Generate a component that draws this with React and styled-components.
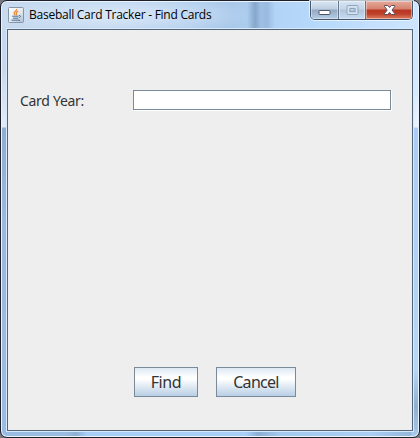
import React from "react";
import styled, { createGlobalStyle } from "styled-components";

const Global = createGlobalStyle`
  *, *::before, *::after { box-sizing: border-box; }
  body { margin: 0; background: #77777d; overflow: hidden; }
`;

const Window = styled.div`
  width: 420px;
  height: 438px;
  display: flex;
  flex-direction: column;
  padding: 0 6px 6px 5px;
  border: 1px solid #1d1f2b;
  border-radius: 7px;
  box-shadow: inset 0 0 0 1px #e9f4ff;
  background:
    linear-gradient(90deg, transparent 246px, rgba(80,112,152,.42) 254px, rgba(106,140,180,.24) 260px, rgba(100,135,178,.3) 266px, transparent 274px) 0 0 / 100% 28px no-repeat,
    radial-gradient(ellipse 135px 22px at 115px 14px, rgba(225,236,250,.85), rgba(210,228,248,.45) 65%, transparent) 0 0 / 100% 28px no-repeat,
    linear-gradient(90deg, #c7d9ed, #a9c8ea 55%, #b2d4f6 66%, #b6d9fb 75%, #cee5fe) 0 0 / 100% 29px no-repeat,
    linear-gradient(180deg, #c5d9ef 28px, #c8d9ee 70px, #e3ebf8 126px, #8facd2 127px, #9ab9de 220px, #9bbce2) 0 0 / 8px 100% no-repeat,
    linear-gradient(180deg, #cee5fe 28px, #d6eafe 90px, #eaf4ff 126px, #a9cdf4 127px, #b3d6fa 370px, #8eafd4 405px, #a9c9eb) 100% 0 / 8px 100% no-repeat,
    linear-gradient(90deg, #9bbce2 65px, #8faed2 75px, #a9cff7 86px, #a9cff7 245px, #8cadd2 257px, #a5caef 280px, #a9cdf3 370px, #91b2d6);
`;

const TitleBar = styled.header`
  height: 28px;
  flex: none;
  display: flex;
  align-items: flex-start;
  padding: 0 0 0 2px;
`;

const AppIcon = styled.svg`
  width: 16px;
  height: 16px;
  flex: none;
  margin-top: 6px;
`;

const Title = styled.h1`
  margin: 5px 0 0 5px;
  flex: 1;
  font: 400 12px/18px "Open Sans", "Noto Sans", sans-serif;
  letter-spacing: -0.25px;
  color: #000;
  white-space: nowrap;
`;

const Controls = styled.div`
  display: flex;
  height: 19px;
  border: 1px solid #47556b;
  border-top: 0;
  border-radius: 0 0 5px 5px;
  box-shadow: 0 0 0 1px rgba(240,248,255,.75);
  overflow: hidden;
`;

const ControlButton = styled.button`
  width: ${(p) => p.$width}px;
  padding: 1px 0 0;
  border: 0;
  border-right: ${(p) => (p.$close ? "0" : "1px solid #65758b")};
  display: flex;
  justify-content: center;
  background: ${(p) =>
    p.$close
      ? "linear-gradient(#e5aa9c 0, #d5826f 8px, #b93522 9px, #bd402a 13px, #dd8062 18px)"
      : p.$disabled
        ? "linear-gradient(#d7e5f4 0, #c3d5e8 8px, #b0c5db 9px, #c5ddf3 18px)"
        : "linear-gradient(#dbe7f3 0, #bccddf 8px, #94a9c1 9px, #b4cde6 18px)"};
  box-shadow: inset 0 0 0 1px rgba(255,255,255,.4);
`;

const Glyph = styled.svg`
  display: block;
  width: 15px;
  height: 17px;
`;

const Content = styled.main`
  flex: 1;
  display: flex;
  flex-direction: column;
  justify-content: space-between;
  margin: 0 0 0 1px;
  padding: 60px 20px 33px 12px;
  border: 1px solid #526579;
  background: #eee;
  box-shadow: 0 0 0 1px #d7e9fb;
`;

const Field = styled.label`
  display: flex;
  align-items: flex-start;
  height: 21px;
`;

const Caption = styled.span`
  width: 113px;
  font: 400 14px/21px "Noto Sans", sans-serif;
  letter-spacing: -0.3px;
  color: #333;
`;

const YearInput = styled.input`
  width: 258px;
  height: 20px;
  margin: 0;
  padding: 0 3px;
  border: 1px solid #7a8a99;
  border-radius: 0;
  outline: 0;
  background: #fff;
  box-shadow: 1px 1px 0 #fff;
`;

const Actions = styled.footer`
  display: flex;
  gap: 18px;
  padding-left: 114px;
`;

const ActionButton = styled.button`
  width: ${(p) => p.$width}px;
  height: 30px;
  padding: 0;
  border: 1px solid #7a8a99;
  border-radius: 0;
  background: linear-gradient(#dde8f3 0, #fff 9px, #fff 11px, #b8cfe5 100%);
  color: #333;
  font: 400 16px/28px "Noto Sans", sans-serif;
  letter-spacing: ${(p) => p.$spacing}px;
`;

export default function App() {
  return (
    <>
      <Global />
      <Window>
        <TitleBar>
          <AppIcon viewBox="0 0 16 16" fill="none">
            <defs>
              <linearGradient id="tile" x2="1" y2="1">
                <stop stopColor="#fff" />
                <stop offset=".55" stopColor="#e4e9ef" />
                <stop offset="1" stopColor="#aebed0" />
              </linearGradient>
            </defs>
            <rect x=".5" y=".5" width="15" height="15" rx="1" fill="url(#tile)" stroke="#8595a8" />
            <path d="M8.7 2C9.2 4.1 5.4 4.4 6.2 6.4c.2.6.8 1 .9 1.7M10.3 4.3C8.6 5 7.8 5.6 8.4 6.6c.3.5.3 1-.3 1.5" stroke="#e9842d" strokeWidth="1.2" />
            <path d="M4.2 9.2h6.3M5 11.2h5M10.9 8.6c2.2-.5 2.1 1.6-.2 2.3M3.4 13.2h8.8" stroke="#476f98" />
          </AppIcon>
          <Title>Baseball Card Tracker - Find Cards</Title>
          <Controls>
            <ControlButton $width={28} aria-label="Minimize">
              <Glyph viewBox="0 0 15 17">
                <rect x="2" y="8.5" width="11" height="4" rx=".7" fill="#fff" stroke="#4d5368" />
              </Glyph>
            </ControlButton>
            <ControlButton $width={27} $disabled aria-label="Maximize">
              <Glyph viewBox="0 0 15 17" fill="none">
                <rect x="3" y="4.5" width="9" height="7" stroke="#d5e2ef" strokeWidth="2" />
                <rect x="2" y="3.5" width="11" height="9" rx="1" stroke="#92a6bb" />
                <rect x="5" y="6.5" width="5" height="3" stroke="#92a6bb" />
              </Glyph>
            </ControlButton>
            <ControlButton $width={46} $close aria-label="Close">
              <Glyph viewBox="0 0 15 17">
                <path d="M2.5 3.5h3.2l1.9 2 1.9-2h3.2v1L10 8l2.7 3.5v1H9.5l-1.9-2-1.9 2H2.5v-1L5.2 8 2.5 4.5z" fill="#fff" stroke="#584a59" />
              </Glyph>
            </ControlButton>
          </Controls>
        </TitleBar>
        <Content>
          <Field>
            <Caption>Card Year:</Caption>
            <YearInput aria-label="Card Year" />
          </Field>
          <Actions>
            <ActionButton $width={64} $spacing={-0.4}>Find</ActionButton>
            <ActionButton $width={80} $spacing={-0.7}>Cancel</ActionButton>
          </Actions>
        </Content>
      </Window>
    </>
  );
}
